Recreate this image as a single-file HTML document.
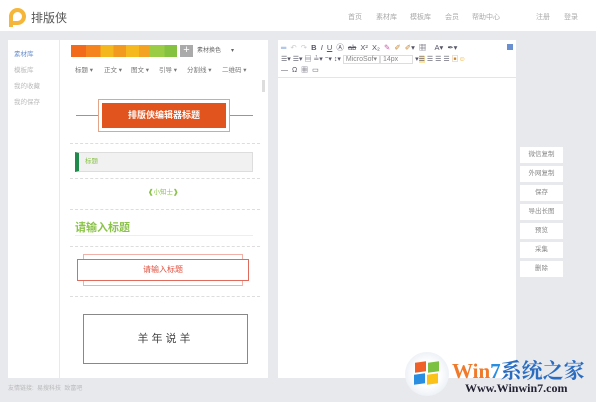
<!DOCTYPE html>
<html><head><meta charset="utf-8"><style>
*{margin:0;padding:0;box-sizing:border-box}
body{width:601px;height:402px;background:#e8e9ed;font-family:"Liberation Sans","Noto Sans CJK SC",sans-serif;position:relative;overflow:hidden;color:#999}
.a{position:absolute}
.hdr{left:0;top:0;width:601px;height:31px;background:#fff}
.nav{font-size:7px;color:#aaa;top:12px}
.side{left:8px;top:40px;width:51px;height:338px;background:#fff}
.side div{font-size:6.5px;color:#bbb;position:absolute;left:6px}
.pan{left:60px;top:40px;width:208px;height:338px;background:#fff}
.ed{left:278px;top:40px;width:238px;height:338px;background:#fff}
.btn{left:520px;width:43px;height:16px;background:#fff;font-size:6.5px;color:#888;text-align:center;line-height:16px}
.dd{top:64px;font-size:6.5px;color:#777}
.dash{left:8px;width:190px;border-top:1px dashed #ddd}
.tb{font-size:7px;color:#556;left:4px;white-space:nowrap}
</style></head><body>
<div class="a hdr"></div>
<div class="a" style="left:596px;top:31px;width:5px;height:371px;background:#fff"></div>
<div class="a" style="left:9px;top:8px;width:17px;height:17px;border:4px solid #f5b73b;border-radius:9px 9px 9px 0"></div>
<div class="a" style="left:9px;top:18px;width:4px;height:9px;background:#f5b73b"></div>
<div class="a" style="left:31px;top:9px;font-size:12px;color:#555">排版侠</div>
<div class="a nav" style="left:348px">首页</div>
<div class="a nav" style="left:376px">素材库</div>
<div class="a nav" style="left:410px">模板库</div>
<div class="a nav" style="left:445px">会员</div>
<div class="a nav" style="left:472px">帮助中心</div>
<div class="a nav" style="left:536px">注册</div>
<div class="a nav" style="left:564px">登录</div>

<div class="a side">
<div style="top:8px;color:#6a8fd0">素材库</div>
<div style="top:24px">模板库</div>
<div style="top:40px">我的收藏</div>
<div style="top:56px">我的保存</div>
</div>

<div class="a pan"></div>
<div class="a" style="left:71px;top:45px;width:106px;height:12px;background:linear-gradient(90deg,#f26b1d 0 14%,#f5841f 14% 28%,#f4b71d 28% 40%,#f29a1f 40% 52%,#f5b81f 52% 64%,#f3a221 64% 74%,#9acd45 74% 88%,#84c240 88%)"></div>
<div class="a" style="left:180px;top:45px;width:13px;height:12px;background:#aaa;color:#fff;font-size:11px;line-height:11px;text-align:center">+</div>
<div class="a" style="left:197px;top:45px;width:48px;height:12px;font-size:6px;color:#666;line-height:12px">素材换色 &nbsp;&nbsp;&nbsp;&nbsp;&nbsp;▾</div>
<div class="a dd" style="left:75px">标题 ▾</div>
<div class="a dd" style="left:104px">正文 ▾</div>
<div class="a dd" style="left:131px">图文 ▾</div>
<div class="a dd" style="left:159px">引导 ▾</div>
<div class="a dd" style="left:187px">分割线 ▾</div>
<div class="a dd" style="left:222px">二维码 ▾</div>
<div class="a" style="left:262px;top:80px;width:3px;height:12px;background:#ddd"></div>
<div class="a" style="left:76px;top:115px;width:177px;height:1px;background:#d9825a"></div>
<div class="a" style="left:98px;top:99px;width:132px;height:33px;border:1px solid #e2a58a;background:#fff"></div>
<div class="a" style="left:102px;top:103px;width:124px;height:25px;background:#e1541e;color:#fff;font-size:9px;font-weight:bold;text-align:center;line-height:25px">排版侠编辑器标题</div>
<div class="a dash" style="left:70px;top:143px"></div>
<div class="a" style="left:75px;top:152px;width:178px;height:20px;background:#f1f1f1;border:1px solid #ddd;border-left:4px solid #1f8a4c;font-size:6.5px;color:#8bc34a;line-height:18px;padding-left:6px">标题</div>
<div class="a dash" style="left:70px;top:178px"></div>
<div class="a" style="left:148px;top:186px;font-size:6.5px;color:#8bc34a"><b>❰</b>小知士<b>❱</b></div>
<div class="a dash" style="left:70px;top:209px"></div>
<div class="a" style="left:75px;top:219px;font-size:11px;font-weight:bold;color:#8bc34a">请输入标题</div>
<div class="a" style="left:75px;top:235px;width:178px;height:1px;background:#eee"></div>
<div class="a dash" style="left:70px;top:246px"></div>
<div class="a" style="left:83px;top:254px;width:160px;height:32px;border:1px solid #f2b1a8"></div>
<div class="a" style="left:77px;top:259px;width:172px;height:22px;border:1px solid #e06a5c;background:#fff;font-size:8px;color:#e0503f;text-align:center;line-height:20px">请输入标题</div>
<div class="a dash" style="left:70px;top:296px"></div>
<div class="a" style="left:83px;top:314px;width:165px;height:50px;border:1px solid #888;font-size:11px;color:#444;text-align:center;line-height:48px;letter-spacing:3px">羊年说羊</div>

<div class="a ed"></div>
<div class="a" style="left:278px;top:77px;width:238px;height:1px;background:#e5e5e5"></div>
<div class="a tb" style="left:281px;top:42px;font-size:7.5px;word-spacing:2px"><span style="color:#6a8fd0">═</span> <span style="color:#ccc">↶ ↷</span> <b>B</b> <i>I</i> <u>U</u> Ⓐ <s>ab</s> X² X₂ <span style="color:#c5a">✎</span> <span style="color:#c83">✐</span> <span style="color:#c83">✐</span>▾ ▦ <span style="margin-left:4px">A▾ ✒▾</span></div>
<div class="a" style="left:507px;top:44px;width:6px;height:6px;background:#6a8fd0"></div>
<div class="a tb" style="left:281px;top:54px;font-size:7px">☰▾ ☰▾ ▤ ≟▾ ⁼▾ ↕▾ <span style="border:1px solid #ddd;padding:0 2px;color:#888">MicroSof▾</span><span style="border:1px solid #ddd;padding:0 14px 0 2px;color:#888">14px</span> ▾<span style="background:#fde3a0">☰</span> ☰ ☰ ☰ <span style="color:#c83">▣</span><span style="color:#e9a000">☺</span></div>
<div class="a tb" style="left:281px;top:65px;font-size:7px;word-spacing:2px">— Ω ▦ ▭</div>

<div class="a btn" style="top:147px">微信复制</div>
<div class="a btn" style="top:166px">外网复制</div>
<div class="a btn" style="top:185px">保存</div>
<div class="a btn" style="top:204px">导出长图</div>
<div class="a btn" style="top:223px">预览</div>
<div class="a btn" style="top:242px">采集</div>
<div class="a btn" style="top:261px">删除</div>

<div class="a" style="left:8px;top:383px;font-size:6px;color:#bbb">友情链接: &nbsp;易搜科技 &nbsp;致富吧</div>

<div class="a" style="left:405px;top:352px;width:44px;height:44px;border-radius:50%;background:radial-gradient(circle,#fff 40%,#dde4ee)"></div>
<div class="a" style="left:415px;top:362px;width:11px;height:10px;background:#f0612a;transform:skewY(-8deg)"></div>
<div class="a" style="left:428px;top:362px;width:11px;height:10px;background:#7dc142;transform:skewY(-8deg)"></div>
<div class="a" style="left:414px;top:374px;width:11px;height:10px;background:#2a8ee0;transform:skewY(-8deg)"></div>
<div class="a" style="left:427px;top:374px;width:11px;height:10px;background:#fbc21a;transform:skewY(-8deg)"></div>
<div class="a" style="left:452px;top:355px;font-size:21px;font-weight:bold;font-family:'Liberation Serif','Noto Serif CJK SC',serif;color:#f07a2a;white-space:nowrap">Win<span style="color:#2a8ee0">7</span><span style="color:#2a6cc0">系统之家</span></div>
<div class="a" style="left:465px;top:381px;font-size:12px;font-weight:bold;font-family:'Liberation Serif',serif;color:#223;white-space:nowrap">Www.Winwin7.com</div>
</body></html>
